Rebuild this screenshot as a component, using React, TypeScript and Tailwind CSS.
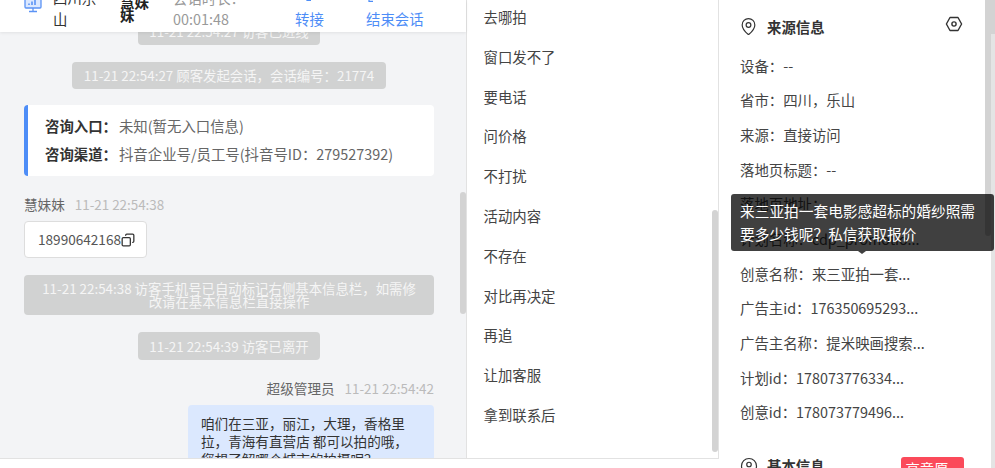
import React from 'react';
import { CircleUser, Copy, MapPin } from 'lucide-react';

const quickReplies = ['去哪拍', '窗口发不了', '要电话', '问价格', '不打扰', '活动内容', '不存在', '对比再决定', '再追', '让加客服', '拿到联系后'];

const sourceRows = [
  '设备：--',
  '省市：四川，乐山',
  '来源：直接访问',
  '落地页标题：--',
  '落地页地址：',
  '计划名称：cdp_promotio...',
  '创意名称：来三亚拍一套...',
  '广告主id：176350695293...',
  '广告主名称：提米映画搜索...',
  '计划id：178073776334...',
  '创意id：178073779496...',
];

const MonitorIcon = () => (
  <svg width="18" height="18" viewBox="0 0 18 18" className="shrink-0">
    <rect x="1" y="1" width="16" height="11" rx="1" fill="#dbe8ff" stroke="#5b93f5" strokeWidth="1.3" />
    <path d="M5 9V7.5M8 9V5.5M11 9V4" stroke="#5b93f5" strokeWidth="1.6" />
    <path d="M9 12v3M5 15.5h8" stroke="#5b93f5" strokeWidth="1.3" />
  </svg>
);

const HexIcon = () => (
  <svg width="18" height="16" viewBox="0 0 18 16" fill="none" stroke="#333" strokeWidth="1.4">
    <path d="M5 1.5h8L16.6 8 13 14.5H5L1.4 8z" strokeLinejoin="round" />
    <circle cx="9" cy="8" r="2.1" />
  </svg>
);

// bottom edge of the action icons, the rest is scrolled out of view
const HeaderStub = () => (
  <svg width="6" height="3" viewBox="0 0 6 3" fill="none" stroke="#4d8df7" strokeWidth="1.2" className="block">
    <path d="M1 0v2.4h4" />
  </svg>
);

const SystemPill = ({ children, className }: { children: React.ReactNode; className: string }) => (
  <div className={`shrink-0 bg-[#d1d2d2] rounded-sm text-[#f5f5f5] text-[13.4px] text-center ${className}`}>{children}</div>
);

const ChatHeader = () => (
  <div className="relative z-10 h-8 shrink-0 bg-white shadow-[0_1px_3px_rgba(0,0,0,0.08)] overflow-hidden flex items-end pb-[3px] text-[14.4px] leading-[21px]">
    <div className="ml-6 w-[29px] self-start -mt-1">
      <MonitorIcon />
    </div>
    <div className="w-[67px] flex flex-col text-[#333]">
      <span className="w-[44px]">四川乐山</span>
    </div>
    <div className="w-[53px] font-bold text-[#222] leading-[13px] mb-[8px]">
      <span className="block w-[29px]">慧妹妹</span>
    </div>
    <div className="w-[122px] text-[#999] flex flex-col">
      <span>会话时长：</span>
      <span>00:01:48</span>
    </div>
    <div className="w-[71px] text-[#4d8df7] flex flex-col">
      <span className="ml-[11px] mb-[7px]"><HeaderStub /></span>
      转接
    </div>
    <div className="text-[#4d8df7] flex flex-col">
      <span className="ml-[2px] mb-[6px]"><HeaderStub /></span>
      结束会话
    </div>
  </div>
);

const ChatBody = () => (
  <div className="flex-1 overflow-hidden relative flex flex-col pl-6 pr-8 text-[13.6px]">
    <SystemPill className="self-center -mt-[15px] w-[182px] h-[28px] leading-[28px]">11-21 22:54:27 访客已进线</SystemPill>
    <SystemPill className="self-center mt-[17px] w-[314px] h-[27px] leading-[27px]">11-21 22:54:27 顾客发起会话，会话编号：21774</SystemPill>

    <div className="shrink-0 mt-4 h-[71px] bg-white rounded-sm border-l-4 border-[#4d8df7] pl-[17px] pt-[7px] leading-[28px] text-[14.4px] text-[#666]">
      <div><b className="text-[#333] mr-0.5">咨询入口：</b>未知(暂无入口信息)</div>
      <div><b className="text-[#333] mr-0.5">咨询渠道：</b>抖音企业号/员工号(抖音号ID：279527392)</div>
    </div>

    <div className="shrink-0 mt-[18px] leading-[20px] text-[#666]">
      慧妹妹<span className="ml-[10px] text-[13.4px] text-[#bbb]">11-21 22:54:38</span>
    </div>
    <div className="shrink-0 mt-[7px] w-[123px] h-[37px] bg-white border border-[#ddd] rounded-[4px] flex items-center pl-[13px] text-[#555]">
      18990642168<Copy className="w-[14px] h-[14px] text-[#333] -scale-x-100" strokeWidth={2.2} />
    </div>

    <SystemPill className="mt-[17px] h-[40px] px-4 pt-[7px] leading-[13px]">
      11-21 22:54:38 访客手机号已自动标记右侧基本信息栏，如需修改请在基本信息栏直接操作
    </SystemPill>
    <SystemPill className="self-center mt-[17px] w-[182px] h-[28px] leading-[28px]">11-21 22:54:39 访客已离开</SystemPill>

    <div className="shrink-0 mt-[18px] self-end leading-[20px] text-[#666]">
      超级管理员<span className="ml-[10px] text-[13.4px] text-[#bbb]">11-21 22:54:42</span>
    </div>
    <div className="mt-[7px] self-end shrink-0 w-[246px] bg-[#dbe8fe] rounded-[4px] px-[13px] pt-[9px] pb-3 leading-[18px] text-[#333]">
      咱们在三亚，丽江，大理，香格里拉，青海有直营店 都可以拍的哦，您想了解哪个城市的拍摄呢？
    </div>

    <div className="absolute right-0 top-[160px] w-[6px] h-[122px] rounded-[3px] bg-[#d3d3d3]" />
  </div>
);

const QuickReplies = () => (
  <div className="relative w-[253px] h-[459px] shrink-0 border-l border-r border-b border-[#e2e2e2] bg-white text-[14.4px] text-[#444] pl-[16.5px] overflow-hidden">
    {quickReplies.map((item) => (
      <div key={item} className="h-[39.8px] leading-[39.8px] -translate-y-[3px]">{item}</div>
    ))}
    <div className="absolute right-0 top-[210px] w-[6px] h-[242px] rounded-[3px] bg-[#d3d3d3]" />
  </div>
);

const SourcePanel = () => (
  <div className="relative flex-1 h-full bg-white text-[14.4px] text-[#444] overflow-hidden">
    <div className="relative h-full w-[266px] pl-[21px]">
      <div className="h-[48.5px] pt-[17px] flex items-start">
        <MapPin className="w-[19px] h-[19px] text-[#333] -ml-[1px]" strokeWidth={1.5} />
        <span className="ml-[9px] font-bold text-[#333] leading-5">来源信息</span>
        <span className="ml-auto mr-[22px] -mt-[1px]"><HexIcon /></span>
      </div>
      {sourceRows.map((row) => (
        <div key={row} className="h-[34.7px] leading-[34.7px] whitespace-nowrap">{row}</div>
      ))}
      <div className="mt-[23.5px] flex items-center h-6">
        <CircleUser className="w-[18px] h-[18px] shrink-0 text-[#333]" strokeWidth={1.6} />
        <span className="ml-[9px] font-bold text-[#333] whitespace-nowrap">基本信息</span>
        <span className="ml-[76px] self-start mt-[3px] w-[63px] h-6 shrink-0 bg-[#fb4a5a] rounded-[3px] text-white text-center leading-6 whitespace-nowrap">高意愿 ▾</span>
      </div>
    </div>
    <div className="absolute top-0 left-[266px] w-[6px] h-[236px] rounded-b-[3px] bg-[#d3d3d3]" />
    <div className="absolute top-[34px] bottom-0 right-0 w-1 bg-[#e4e4e4]" />
    <div className="absolute top-0 right-0 w-1 h-[34px] bg-[#d3d3d3]" />
  </div>
);

export default function App() {
  return (
    <div
      className="relative w-[995px] h-[468px] overflow-hidden bg-white flex"
      style={{ fontFamily: '"Noto Sans CJK SC", "Noto Sans", sans-serif' }}
    >
      <div className="w-[466px] h-full shrink-0 flex flex-col bg-white">
        <div className="h-[459px] shrink-0 flex flex-col bg-[#f3f4f6] border-b border-[#e2e2e2]">
          <ChatHeader />
          <ChatBody />
        </div>
      </div>
      <QuickReplies />
      <SourcePanel />

      {/* Tooltip */}
      <div className="absolute left-[731px] top-[194px] w-[263px] h-[57px] rounded-[3px] bg-black/75 text-white text-[14.7px] leading-[23px] px-[9px] pt-[5px]">
        来三亚拍一套电影感超标的婚纱照需要多少钱呢？私信获取报价
        <div className="absolute left-[127px] -bottom-[3px] w-0 h-0 border-x-[4px] border-x-transparent border-t-[3px] border-t-black/75" />
      </div>
    </div>
  );
}
